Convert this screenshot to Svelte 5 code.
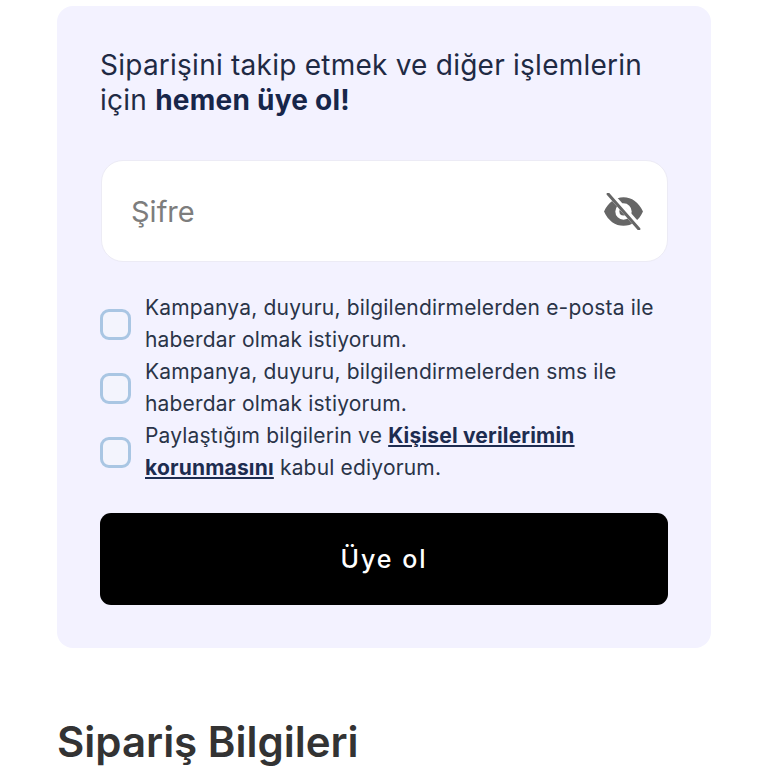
<script lang="ts">
  const consents = [
    { id: "email", text: "Kampanya, duyuru, bilgilendirmelerden e-posta ile haberdar olmak istiyorum." },
    { id: "sms", text: "Kampanya, duyuru, bilgilendirmelerden sms ile haberdar olmak istiyorum." },
  ];
</script>

<main class="page">
  <section class="card">
    <p class="lead">Siparişini takip etmek ve diğer işlemlerin için <strong>hemen üye ol!</strong></p>

    <div class="field">
      <span class="placeholder">Şifre</span>
      <svg class="eye" viewBox="0 0 40 36" width="41" height="37" aria-hidden="true">
        <path fill="#666" fill-rule="evenodd" d="M1 18C5 9 12 4 20 4s15 5 19 14c-4 9-11 14-19 14S5 27 1 18Zm19-8a8 8 0 1 0 0 16 8 8 0 0 0 0-16Z" />
        <circle cx="20" cy="18" r="4" fill="#666" />
        <path d="M6 0 36 34" stroke="#fff" stroke-width="6" />
        <path d="M5 1 35 35" stroke="#666" stroke-width="3" stroke-linecap="round" />
      </svg>
    </div>

    <div class="consents">
      {#each consents as item (item.id)}
        <label class="consent">
          <span class="box"></span>
          <span>{item.text}</span>
        </label>
      {/each}
      <label class="consent">
        <span class="box"></span>
        <span>Paylaştığım bilgilerin ve <a href="#kvkk">Kişisel verilerimin korunmasını</a> kabul ediyorum.</span>
      </label>
    </div>

    <button class="submit" type="button">Üye ol</button>
  </section>

  <h2>Sipariş Bilgileri</h2>
</main>

<style>
  :global(body) {
    background: #fff;
    overflow: hidden;
  }

  .page {
    height: 768px;
    overflow: hidden;
    box-sizing: border-box;
    padding: 6px 57px 0;
    font-family: Inter, "Liberation Sans", sans-serif;
    color: #1f2a44;
  }

  .card {
    box-sizing: border-box;
    height: 642px;
    padding: 42px 43px 0;
    border-radius: 16px;
    background: #f3f2ff;
  }

  .lead {
    margin: 0;
    font-size: 28px;
    line-height: 35px;
    letter-spacing: 0.24px;
  }

  .lead strong {
    font-weight: 700;
    color: #17264a;
  }

  .field {
    display: flex;
    align-items: center;
    justify-content: space-between;
    box-sizing: border-box;
    height: 102px;
    margin: 42px 0 0 1px;
    padding: 0 23px 0 29px;
    border: 1px solid #ecebf5;
    border-radius: 22px;
    background: #fff;
  }

  .placeholder {
    font-size: 29px;
    color: #7d7d7d;
  }

  .consents {
    display: flex;
    flex-direction: column;
    margin-top: 30px;
  }

  .consent {
    display: flex;
    align-items: center;
    gap: 14px;
    font-size: 21px;
    line-height: 32px;
    letter-spacing: 0.18px;
    color: #2a3448;
  }

  .box {
    flex: none;
    box-sizing: border-box;
    width: 31px;
    height: 31px;
    border: 3px solid #a9c6e3;
    border-radius: 9px;
    background: #f3f4fd;
  }

  .consent a {
    font-weight: 700;
    color: #1d2c50;
    text-decoration: underline;
  }

  .submit {
    display: block;
    width: 568px;
    height: 92px;
    margin-top: 29px;
    border: 0;
    border-radius: 11px;
    background: #000;
    color: #fff;
    font-family: inherit;
    font-size: 25px;
    font-weight: 500;
    letter-spacing: 2px;
  }

  h2 {
    margin: 69px 0 0;
    font-size: 42px;
    line-height: 50px;
    font-weight: 600;
    color: #333;
  }
</style>
